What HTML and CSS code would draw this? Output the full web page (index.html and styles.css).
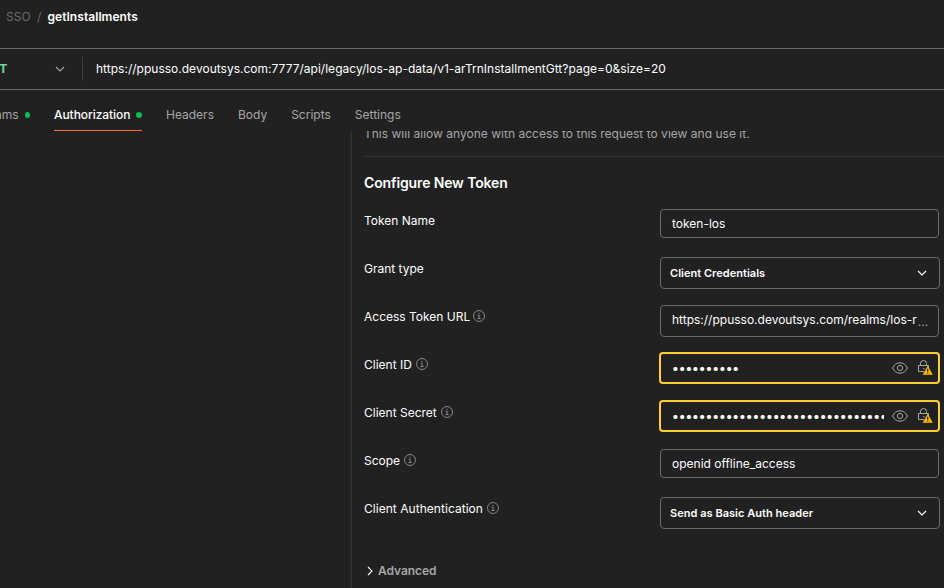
FILE: index.html
```html
<!DOCTYPE html>
<html lang="en">
<head>
<meta charset="utf-8">
<title>getInstallments</title>
<link rel="stylesheet" href="styles.css">
</head>
<body>
<svg class="defs" width="0" height="0" aria-hidden="true">
  <symbol id="chevron" viewBox="0 0 12 12"><path d="M2 4l4 4 4-4" fill="none" stroke="currentColor" stroke-width="1.1"/></symbol>
  <symbol id="info" viewBox="0 0 12 12"><circle cx="6" cy="6" r="5.5" fill="none" stroke="currentColor" stroke-width=".9"/><path d="M4.6 5.3h1.6v3M4.3 8.5h3.4M5.4 3.4h1.2" fill="none" stroke="currentColor" stroke-width=".9"/></symbol>
  <symbol id="eye" viewBox="0 0 16 12"><path d="M.6 6C2.2 2.6 4.9.8 8 .8S13.800 2.600 15.400 6C13.800 9.400 11.100 11.200 8 11.200S2.200 9.400.6 6z" fill="none" stroke="currentColor"/><circle cx="8" cy="6" r="2.6" fill="none" stroke="currentColor"/></symbol>
  <symbol id="lock" viewBox="0 0 15 15"><path d="M6 11.500H.5v-6h10V8M2.500 5.500V3.300a3 2.800 0 0 1 6 0v2.200" fill="none" stroke="#a6a6a6"/><path d="M5 8h1.500v1.500H5z" fill="#777"/><path d="M9.700 6.300L14.300 14.500H5.100z" fill="#ffb400" stroke="#ffb400" stroke-width=".6" stroke-linejoin="round"/><path d="M9.700 8.800v3M9.700 12.500v1.200" stroke="#212121" stroke-width="1.200"/></symbol>
</svg>
<header class="crumbs"><span class="parent">SSO</span><span class="slash">/</span><strong>getInstallments</strong></header>
<div class="urlbar">
  <div class="method"><span>GET</span><svg class="chev"><use href="#chevron"/></svg></div>
  <div class="url">https://ppusso.devoutsys.com:7777/api/legacy/los-ap-data/v1-arTrnInstallmentGtt?page=0&amp;size=20</div>
</div>
<nav class="tabs">
  <a class="tab params">Params<i class="dot"></i></a>
  <a class="tab active"><span>Authorization</span><i class="dot"></i></a>
  <a class="tab headers">Headers</a>
  <a class="tab bodytab">Body</a>
  <a class="tab scripts">Scripts</a>
  <a class="tab settings">Settings</a>
</nav>
<main class="content">
  <aside></aside>
  <section class="panel">
    <p class="note"><span>This will allow anyone with access to this request to view and use it.</span></p>
    <h2><span>Configure New Token</span></h2>
    <div class="row"><label>Token Name</label><div class="field short"><span class="value">token-los</span></div></div>
    <div class="row"><label>Grant type</label><div class="field select"><b class="grant">Client Credentials</b><svg class="chev"><use href="#chevron"/></svg></div></div>
    <div class="row"><label>Access Token URL<svg class="info tight"><use href="#info"/></svg></label><div class="field long"><span class="value">https://ppusso.devoutsys.com/realms/los-r</span><span class="more">...</span></div></div>
    <div class="row"><label>Client ID<svg class="info"><use href="#info"/></svg></label><div class="field warn"><span class="secret">••••••••••</span><svg class="eye"><use href="#eye"/></svg><svg class="lock"><use href="#lock"/></svg></div></div>
    <div class="row"><label>Client Secret<svg class="info"><use href="#info"/></svg></label><div class="field warn"><span class="secret">••••••••••••••••••••••••••••••••</span><svg class="eye"><use href="#eye"/></svg><svg class="lock"><use href="#lock"/></svg></div></div>
    <div class="row"><label>Scope<svg class="info"><use href="#info"/></svg></label><div class="field short"><span class="value">openid offline_access</span></div></div>
    <div class="row"><label class="wide">Client Authentication<svg class="info"><use href="#info"/></svg></label><div class="field select"><b>Send as Basic Auth header</b><svg class="chev"><use href="#chevron"/></svg></div></div>
    <div class="advanced"><svg class="chev"><use href="#chevron"/></svg><span>Advanced</span></div>
  </section>
</main>
</body>
</html>
```
FILE: styles.css
```css
* { box-sizing: border-box; }
body {
  margin: 0;
  height: 588px;
  overflow: hidden;
  display: flex;
  flex-direction: column;
  background: #212121;
  color: #fff;
  font: 12px/16px Inter, sans-serif;
  white-space: nowrap;
}
.defs { position: absolute; }
svg { flex: none; display: block; }
.chev { width: 12px; height: 12px; }

.crumbs { height: 48px; padding: 9px 0 0 6px; display: flex; }
.crumbs .parent, .crumbs .slash { color: #6b6b6b; }
.crumbs .slash { margin: 0 6px 0 6.500px; }
.crumbs strong { font-weight: 600; letter-spacing: .06px; }

.urlbar {
  height: 42px;
  flex: none;
  display: flex;
  align-items: center;
  border: solid #6b6b6b;
  border-width: 1px 0;
}
.method {
  width: 83px;
  height: 24px;
  display: flex;
  align-items: center;
  justify-content: space-between;
  padding-right: 16px;
  border-right: 1px solid #3d3d3d;
  color: #6bdd9a;
  font-weight: 700;
}
.method span { margin-left: -17px; }
.method .chev { color: #a6a6a6; }
.url { margin-left: 13px; letter-spacing: .014px; }

.tabs { height: 41px; flex: none; display: flex; gap: 24px; color: #a6a6a6; }
.tab { height: 41px; padding-top: 17px; display: flex; }
.params { margin-left: -24px; width: 54px; justify-content: flex-end; }
.active { color: #fff; font-weight: 500; letter-spacing: -.06px; border-bottom: 1px solid #ff6c37; width: 88px; justify-content: space-between; }
.dot { width: 6px; height: 6px; margin: 5px 0 0 6px; border-radius: 50%; background: #0cbb52; }
.active .dot { margin-left: 0; }

.content { flex: 1; min-height: 0; display: flex; }
aside { width: 351px; flex: none; }
.panel { flex: 1; padding-left: 12px; border-left: 1px solid #333; overflow: hidden; }
.note {
  display: flow-root;
  height: 26px;
  margin: 0;
  border-bottom: 1px solid #333;
  color: #a6a6a6;
  letter-spacing: .015px;
}
.note span { display: block; margin-top: -5px; }
h2 { height: 41px; margin: 0; padding-top: 16px; font-size: 14px; line-height: 20px; font-weight: 600; letter-spacing: -.13px; }

.row { height: 48px; display: grid; grid-template-columns: 295px 281px; align-items: start; }
label { display: flex; padding-top: 15px; }
label.wide { letter-spacing: .04px; }
.info { width: 12px; height: 12px; margin: 1px 0 0 4px; color: #919191; }
.info.tight { margin-left: 3px; }
.field {
  display: flex;
  align-items: center;
  height: 32px;
  margin: 11px 1px 0 1px;
  padding-left: 11px;
  border: 1px solid #6b6b6b;
  border-radius: 4px;
}
.short { height: 29px; }
.long .value { padding-bottom: 2px; }
.select { margin-right: 0; padding: 0 11px 0 9px; justify-content: space-between; }
.select b { font-size: 11px; font-weight: 600; letter-spacing: .03px; }
.more { color: #a6a6a6; margin-left: 1px; padding-top: 2px; }
.warn { margin: 10px 0 0; border: 2px solid #ffcf33; }
.secret { width: 212px; margin-right: 1px; overflow: hidden; font-size: 13px; letter-spacing: -.6px; padding-bottom: 1px; text-indent: -.3px; }
.eye { width: 16px; height: 12px; margin: 0 0 1px 7px; color: #a6a6a6; }
.lock { width: 15px; height: 15px; margin: 0 0 1px 10px; }

.advanced { display: flex; align-items: center; height: 16px; margin-top: 29px; color: #a6a6a6; font-weight: 600; letter-spacing: -.05px; }
.advanced .chev { transform: rotate(-90deg); color: #fff; margin-right: 2px; }
```
